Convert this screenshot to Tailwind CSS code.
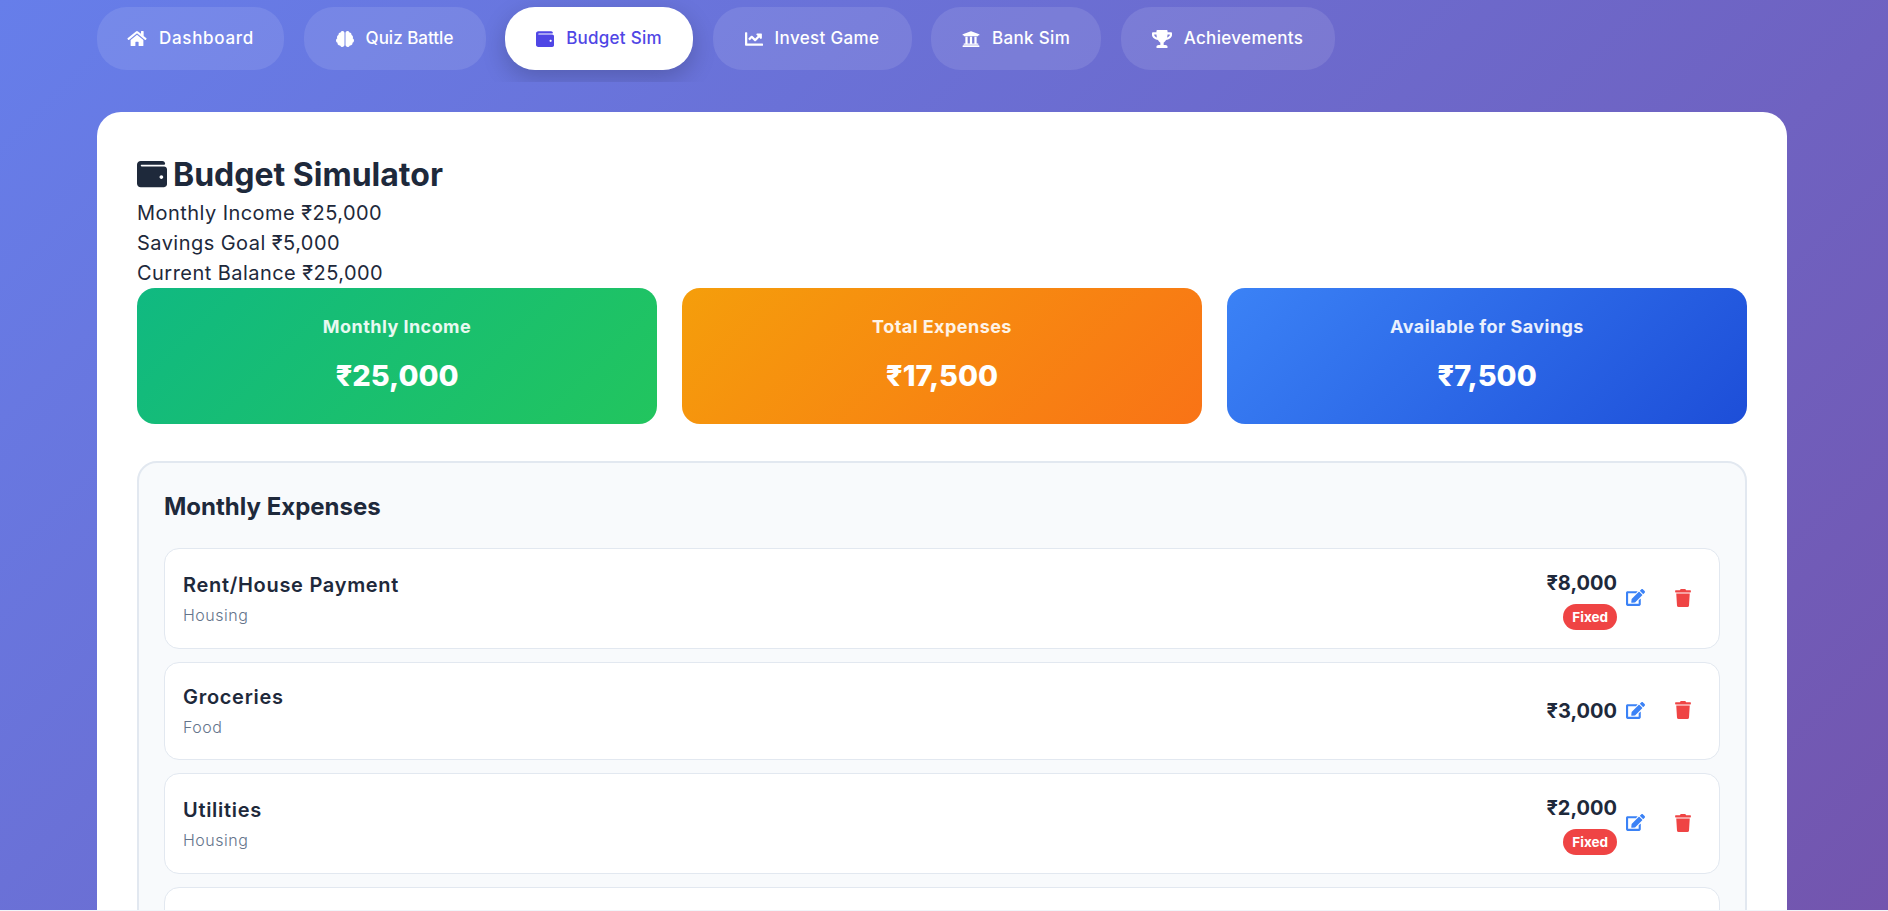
<!DOCTYPE html>
<html><head><meta charset="utf-8"><script src="https://cdn.jsdelivr.net/npm/@tailwindcss/browser@4"></script></head>
<body class="m-0">
<div class="h-[911px] overflow-hidden border-b border-[#f1f5f9] bg-[linear-gradient(135deg,#667eea,#7355ae)] font-['Inter','Noto_Sans',sans-serif] text-[#1e293b]">
  <nav class="h-[82px] overflow-hidden pt-[7px] pl-[97px] flex gap-[19.5px] text-[17px] font-medium text-white">
    <a class="h-[63px] w-[187px] rounded-[30px] bg-white/10 flex items-center justify-center gap-3">
      <svg class="w-[20px] h-[17px] fill-current" viewBox="0 0 576 512"><path d="M280.37 148.26L96 300.11V464a16 16 0 0 0 16 16l112.06-.29a16 16 0 0 0 15.92-16V368a16 16 0 0 1 16-16h64a16 16 0 0 1 16 16v95.64a16 16 0 0 0 16 16.05L464 480a16 16 0 0 0 16-16V300L295.67 148.26a12.19 12.19 0 0 0-15.3 0zM571.6 251.47L488 182.56V44.05a12 12 0 0 0-12-12h-56a12 12 0 0 0-12 12v72.61L318.47 43a48 48 0 0 0-61 0L4.34 251.47a12 12 0 0 0-1.6 16.9l25.5 31A12 12 0 0 0 45.15 301l235.22-193.74a12.19 12.19 0 0 1 15.3 0L530.9 301a12 12 0 0 0 16.9-1.6l25.5-31a12 12 0 0 0-1.7-16.93z"/></svg>
      <span class="tracking-[0.7px]">Dashboard</span></a>
    <a class="h-[63px] w-[182px] rounded-[30px] bg-white/10 flex items-center justify-center gap-3">
      <svg class="w-[18px] h-[16px] fill-current" viewBox="0 0 576 512"><path d="M208 0c-29.9 0-54.7 20.5-61.8 48.2-.8 0-1.4-.2-2.2-.2-35.3 0-64 28.7-64 64 0 4.8.6 9.5 1.7 14C52.5 138 32 166.6 32 200c0 12.6 3.2 24.3 8.3 34.9C16.3 248.7 0 274.3 0 304c0 33.3 20.4 61.9 49.4 73.9-.9 4.6-1.4 9.3-1.4 14.1 0 39.8 32.2 72 72 72 4.1 0 8.1-.5 12-1.2 9.6 28.5 36.2 49.2 68 49.2 39.8 0 72-32.2 72-72V64c0-35.3-28.7-64-64-64zm368 304c0-29.7-16.3-55.3-40.3-69.1 5.2-10.6 8.3-22.3 8.3-34.9 0-33.4-20.5-62-49.7-74 1-4.5 1.7-9.2 1.7-14 0-35.3-28.7-64-64-64-.8 0-1.5.2-2.2.2C422.7 20.5 397.9 0 368 0c-35.3 0-64 28.6-64 64v376c0 39.8 32.2 72 72 72 31.8 0 58.4-20.7 68-49.2 3.9.7 7.9 1.2 12 1.2 39.8 0 72-32.2 72-72 0-4.8-.5-9.5-1.4-14.1 29-12 49.4-40.6 49.4-73.9z"/></svg>
      <span>Quiz Battle</span></a>
    <a class="h-[63px] w-[188px] rounded-[30px] bg-white text-[#4f46e5] shadow-[0_8px_25px_rgba(0,0,0,0.2)] flex items-center justify-center gap-3">
      <svg class="w-[18px] h-[18px] fill-current" viewBox="0 0 512 512"><path d="M461.2 128H80c-8.84 0-16-7.16-16-16s7.16-16 16-16h384c8.84 0 16-7.16 16-16 0-26.51-21.49-48-48-48H64C28.65 32 0 60.65 0 96v320c0 35.35 28.65 64 64 64h397.2c28.02 0 50.8-21.53 50.8-48V176c0-26.47-22.78-48-50.8-48zM416 340c-17.67 0-32-14.33-32-32s14.33-32 32-32 32 14.33 32 32-14.33 32-32 32z"/></svg>
      <span class="tracking-[0.25px]">Budget Sim</span></a>
    <a class="h-[63px] w-[199px] rounded-[30px] bg-white/10 flex items-center justify-center gap-3">
      <svg class="w-[18px] h-[18px] fill-current" viewBox="0 0 512 512"><path d="M496 384H64V80c0-8.84-7.16-16-16-16H16C7.16 64 0 71.16 0 80v336c0 17.67 14.33 32 32 32h464c8.84 0 16-7.16 16-16v-32c0-8.84-7.16-16-16-16zM464 96H345.94c-21.38 0-32.09 25.85-16.97 40.97l32.4 32.4L288 242.75l-73.37-73.37c-12.5-12.5-32.76-12.5-45.25 0l-68.69 68.69c-6.25 6.25-6.25 16.38 0 22.63l22.62 22.62c6.25 6.25 16.38 6.25 22.63 0L192 237.25l73.37 73.37c12.5 12.5 32.76 12.5 45.25 0l96-96 32.4 32.4c15.12 15.12 40.97 4.41 40.97-16.97V112c.01-8.84-7.15-16-16-16z"/></svg>
      <span class="tracking-[0.35px]">Invest Game</span></a>
    <a class="h-[63px] w-[170px] rounded-[30px] bg-white/10 flex items-center justify-center gap-3">
      <svg class="w-[18px] h-[18px] fill-current" viewBox="0 0 512 512"><path d="M496 128v16a8 8 0 0 1-8 8h-24v12c0 6.627-5.373 12-12 12H60c-6.627 0-12-5.373-12-12v-12H24a8 8 0 0 1-8-8v-16a8 8 0 0 1 4.941-7.392l232-88a7.996 7.996 0 0 1 6.118 0l232 88A8 8 0 0 1 496 128zm-24 304H40c-13.255 0-24 10.745-24 24v16a8 8 0 0 0 8 8h464a8 8 0 0 0 8-8v-16c0-13.255-10.745-24-24-24zM96 192v192H60c-6.627 0-12 5.373-12 12v20h416v-20c0-6.627-5.373-12-12-12h-36V192h-64v192h-64V192h-64v192h-64V192H96z"/></svg>
      <span class="tracking-[0.35px]">Bank Sim</span></a>
    <a class="h-[63px] w-[214px] rounded-[30px] bg-white/10 flex items-center justify-center gap-3">
      <svg class="w-[20px] h-[18px] fill-current" viewBox="0 0 576 512"><path d="M552 64H448V24c0-13.3-10.7-24-24-24H152c-13.3 0-24 10.7-24 24v40H24C10.7 64 0 74.7 0 88v56c0 35.7 22.5 72.4 61.9 100.7 31.5 22.7 69.8 37.1 110 41.7C203.3 338.5 240 360 240 360v72h-48c-35.3 0-64 20.7-64 56v12c0 6.6 5.4 12 12 12h296c6.6 0 12-5.4 12-12v-12c0-35.3-28.7-56-64-56h-48v-72s36.7-21.5 68.1-73.6c40.3-4.6 78.6-19 110-41.7 39.3-28.3 61.9-65 61.9-100.7V88c0-13.3-10.7-24-24-24zM99.3 192.8C74.9 175.2 64 155.6 64 144v-16h64.2c1 32.6 5.8 61.2 12.8 86.2-15.1-5.2-29.2-12.4-41.7-21.4zM512 144c0 16.1-17.7 36.1-35.3 48.8-12.5 9-26.7 16.2-41.8 21.4 7-25 11.8-53.6 12.8-86.2H512v16z"/></svg>
      <span class="tracking-[0.35px]">Achievements</span></a>
  </nav>
  <main class="mt-[30px] ml-[97px] w-[1690px] bg-white rounded-t-[24px] px-10 pt-[38px] h-[900px]">
    <h1 class="flex items-center gap-[6px] h-[48px] text-[32px] font-bold">
      <svg class="w-[30px] h-[30px] fill-current" viewBox="0 0 512 512"><path d="M461.2 128H80c-8.84 0-16-7.16-16-16s7.16-16 16-16h384c8.84 0 16-7.16 16-16 0-26.51-21.49-48-48-48H64C28.65 32 0 60.65 0 96v320c0 35.35 28.65 64 64 64h397.2c28.02 0 50.8-21.53 50.8-48V176c0-26.47-22.78-48-50.8-48zM416 340c-17.67 0-32-14.33-32-32s14.33-32 32-32 32 14.33 32 32-14.33 32-32 32z"/></svg>
      <span class="pt-[2px]">Budget Simulator</span></h1>
    <div class="text-[20px] leading-[30px] tracking-[0.45px] font-normal">
      <p>Monthly Income ₹25,000</p><p>Savings Goal ₹5,000</p><p>Current Balance ₹25,000</p>
    </div>
    <div class="grid grid-cols-3 gap-[25px] text-white text-center">
      <div class="h-[136px] rounded-[18px] bg-[linear-gradient(135deg,#10b981,#22c55e)] pt-[24px]">
        <div class="text-[18px] font-bold tracking-[0.45px] text-white/90 leading-[30px]">Monthly Income</div>
        <div class="mt-[12px] text-[29px] font-extrabold leading-[44px]">₹25,000</div></div>
      <div class="h-[136px] rounded-[18px] bg-[linear-gradient(135deg,#f59e0b,#f97316)] pt-[24px]">
        <div class="text-[18px] font-bold tracking-[0.45px] text-white/90 leading-[30px]">Total Expenses</div>
        <div class="mt-[12px] text-[29px] font-extrabold leading-[44px]">₹17,500</div></div>
      <div class="h-[136px] rounded-[18px] bg-[linear-gradient(135deg,#3b82f6,#1d4ed8)] pt-[24px]">
        <div class="text-[18px] font-bold tracking-[0.45px] text-white/90 leading-[30px]">Available for Savings</div>
        <div class="mt-[12px] text-[29px] font-extrabold leading-[44px]">₹7,500</div></div>
    </div>
    <section class="mt-[37px] rounded-t-[20px] border-2 border-[#e2e8f0] bg-[#f8fafc] px-[25px] pt-[24px] h-[600px]">
      <h2 class="text-[24px] font-bold leading-[40px] mb-[21px]">Monthly Expenses</h2>
      <div class="flex flex-col gap-[13px]">
        <div class="h-[101px] rounded-[15px] border border-[#e2e8f0] bg-white pl-[18px] pr-[28px] flex items-center">
          <div class="flex-1 pt-[2px]"><div class="text-[20px] font-semibold tracking-[0.7px] leading-[30px]">Rent/House Payment</div><div class="text-[16px] tracking-[0.5px] font-[350] text-[#64748b] leading-[30px]">Housing</div></div>
          <div class="flex flex-col items-end"><div class="text-[20px] font-bold leading-[30px]">₹8,000</div>
            <span class="mt-[6px] rounded-full bg-[#ef4444] px-[9px] h-[26px] leading-[26px] text-[13.5px] font-bold text-white">Fixed</span></div>
          <button class="ml-[9px] mb-[2px] w-[19px] text-[#3b82f6]"><svg class="block w-[19px] h-[17px] fill-current" viewBox="0 0 576 512"><path d="M402.6 83.2l90.2 90.2c3.8 3.8 3.8 10 0 13.8L274.4 405.6l-92.8 10.3c-12.4 1.4-22.9-9.1-21.5-21.5l10.3-92.8L388.8 83.2c3.8-3.8 10-3.8 13.8 0zm162-22.9l-48.8-48.8c-15.2-15.2-39.9-15.2-55.2 0l-35.4 35.4c-3.8 3.8-3.8 10 0 13.8l90.2 90.2c3.8 3.8 10 3.8 13.8 0l35.4-35.4c15.2-15.3 15.2-40 0-55.2zM384 346.2V448H64V128h229.8c3.2 0 6.2-1.3 8.5-3.5l40-40c7.6-7.6 2.2-20.5-8.5-20.5H48C21.5 64 0 85.5 0 112v352c0 26.5 21.5 48 48 48h352c26.5 0 48-21.5 48-48V306.2c0-10.7-12.9-16-20.5-8.5l-40 40c-2.2 2.3-3.5 5.3-3.5 8.5z"/></svg></button>
          <button class="ml-[30px] mb-[2px] w-[16px] text-[#ef4444]"><svg class="block w-[16px] h-[18px] fill-current" viewBox="0 0 448 512"><path d="M432 32H312l-9.4-18.7A24 24 0 0 0 281.1 0H166.8a23.72 23.72 0 0 0-21.4 13.3L136 32H16A16 16 0 0 0 0 48v32a16 16 0 0 0 16 16h416a16 16 0 0 0 16-16V48a16 16 0 0 0-16-16zM53.2 467a48 48 0 0 0 47.9 45h245.8a48 48 0 0 0 47.9-45L416 128H32z"/></svg></button>
        </div>
        <div class="h-[98px] rounded-[15px] border border-[#e2e8f0] bg-white pl-[18px] pr-[28px] flex items-center">
          <div class="flex-1 pt-[2px]"><div class="text-[20px] font-semibold tracking-[0.7px] leading-[30px]">Groceries</div><div class="text-[16px] tracking-[0.5px] font-[350] text-[#64748b] leading-[30px]">Food</div></div>
          <div class="text-[20px] font-bold leading-[30px]">₹3,000</div>
          <button class="ml-[9px] mb-[2px] w-[19px] text-[#3b82f6]"><svg class="block w-[19px] h-[17px] fill-current" viewBox="0 0 576 512"><path d="M402.6 83.2l90.2 90.2c3.8 3.8 3.8 10 0 13.8L274.4 405.6l-92.8 10.3c-12.4 1.4-22.9-9.1-21.5-21.5l10.3-92.8L388.8 83.2c3.8-3.8 10-3.8 13.8 0zm162-22.9l-48.8-48.8c-15.2-15.2-39.9-15.2-55.2 0l-35.4 35.4c-3.8 3.8-3.8 10 0 13.8l90.2 90.2c3.8 3.8 10 3.8 13.8 0l35.4-35.4c15.2-15.3 15.2-40 0-55.2zM384 346.2V448H64V128h229.8c3.2 0 6.2-1.3 8.5-3.5l40-40c7.6-7.6 2.2-20.5-8.5-20.5H48C21.5 64 0 85.5 0 112v352c0 26.5 21.5 48 48 48h352c26.5 0 48-21.5 48-48V306.2c0-10.7-12.9-16-20.5-8.5l-40 40c-2.2 2.3-3.5 5.3-3.5 8.5z"/></svg></button>
          <button class="ml-[30px] mb-[2px] w-[16px] text-[#ef4444]"><svg class="block w-[16px] h-[18px] fill-current" viewBox="0 0 448 512"><path d="M432 32H312l-9.4-18.7A24 24 0 0 0 281.1 0H166.8a23.72 23.72 0 0 0-21.4 13.3L136 32H16A16 16 0 0 0 0 48v32a16 16 0 0 0 16 16h416a16 16 0 0 0 16-16V48a16 16 0 0 0-16-16zM53.2 467a48 48 0 0 0 47.9 45h245.8a48 48 0 0 0 47.9-45L416 128H32z"/></svg></button>
        </div>
        <div class="h-[101px] rounded-[15px] border border-[#e2e8f0] bg-white pl-[18px] pr-[28px] flex items-center">
          <div class="flex-1 pt-[2px]"><div class="text-[20px] font-semibold tracking-[0.7px] leading-[30px]">Utilities</div><div class="text-[16px] tracking-[0.5px] font-[350] text-[#64748b] leading-[30px]">Housing</div></div>
          <div class="flex flex-col items-end"><div class="text-[20px] font-bold leading-[30px]">₹2,000</div>
            <span class="mt-[6px] rounded-full bg-[#ef4444] px-[9px] h-[26px] leading-[26px] text-[13.5px] font-bold text-white">Fixed</span></div>
          <button class="ml-[9px] mb-[2px] w-[19px] text-[#3b82f6]"><svg class="block w-[19px] h-[17px] fill-current" viewBox="0 0 576 512"><path d="M402.6 83.2l90.2 90.2c3.8 3.8 3.8 10 0 13.8L274.4 405.6l-92.8 10.3c-12.4 1.4-22.9-9.1-21.5-21.5l10.3-92.8L388.8 83.2c3.8-3.8 10-3.8 13.8 0zm162-22.9l-48.8-48.8c-15.2-15.2-39.9-15.2-55.2 0l-35.4 35.4c-3.8 3.8-3.8 10 0 13.8l90.2 90.2c3.8 3.8 10 3.8 13.8 0l35.4-35.4c15.2-15.3 15.2-40 0-55.2zM384 346.2V448H64V128h229.8c3.2 0 6.2-1.3 8.5-3.5l40-40c7.6-7.6 2.2-20.5-8.5-20.5H48C21.5 64 0 85.5 0 112v352c0 26.5 21.5 48 48 48h352c26.5 0 48-21.5 48-48V306.2c0-10.7-12.9-16-20.5-8.5l-40 40c-2.2 2.3-3.5 5.3-3.5 8.5z"/></svg></button>
          <button class="ml-[30px] mb-[2px] w-[16px] text-[#ef4444]"><svg class="block w-[16px] h-[18px] fill-current" viewBox="0 0 448 512"><path d="M432 32H312l-9.4-18.7A24 24 0 0 0 281.1 0H166.8a23.72 23.72 0 0 0-21.4 13.3L136 32H16A16 16 0 0 0 0 48v32a16 16 0 0 0 16 16h416a16 16 0 0 0 16-16V48a16 16 0 0 0-16-16zM53.2 467a48 48 0 0 0 47.9 45h245.8a48 48 0 0 0 47.9-45L416 128H32z"/></svg></button>
        </div>
        <div class="h-[100px] rounded-[15px] border border-[#e2e8f0] bg-white"></div>
      </div>
    </section>
  </main>
</div>
</body></html>
